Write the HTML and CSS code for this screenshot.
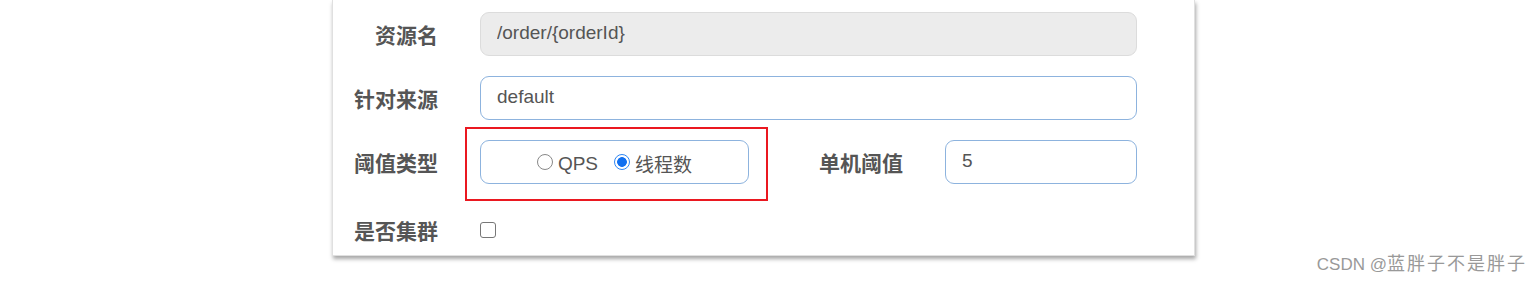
FILE: index.html
```html
<!DOCTYPE html>
<html lang="zh-CN">
<head>
	<meta charset="utf-8">
	<title>流控规则</title>
	<link rel="stylesheet" href="styles.css">
</head>
<body>
	<div class="panel">
		<!-- 资源名 -->
		<div class="form-row">
			<label class="form-label">资源名</label>
			<input class="form-input" type="text" value="/order/{orderId}" readonly>
		</div>

		<!-- 针对来源 -->
		<div class="form-row">
			<label class="form-label">针对来源</label>
			<input class="form-input" type="text" value="default">
		</div>

		<!-- 阈值类型 / 单机阈值 -->
		<div class="form-row">
			<label class="form-label">阈值类型</label>
			<div class="highlight">
				<div class="radio-group">
					<label class="radio"><input type="radio" name="grade"> QPS</label>
					<label class="radio"><input type="radio" name="grade" checked> 线程数</label>
				</div>
			</div>
			<label class="form-label side-label">单机阈值</label>
			<input class="form-input small-input" type="text" value="5">
		</div>

		<!-- 是否集群 -->
		<div class="form-row last-row">
			<label class="form-label">是否集群</label>
			<input class="checkbox" type="checkbox">
		</div>
	</div>

	<div class="watermark"><span class="wm-latin">CSDN @</span><span class="wm-cjk">蓝胖子不是胖子</span></div>
</body>
</html>
```

FILE: styles.css
```css
body {
	margin: 0;
	width: 1540px;
	height: 283px;
	position: relative;
	background: #fff;
	font-family: "Liberation Sans", "Noto Sans CJK SC", sans-serif;
	overflow: hidden;
}

.panel {
	margin-left: 332px;
	width: 863px;
	box-sizing: border-box;
	padding: 12px 57px 3px 0;
	background: #fff;
	border: 1px solid #e0e0e0;
	border-top: none;
	box-shadow: 1px 3px 4px rgba(0, 0, 0, 0.35);
}

.form-row {
	display: flex;
	align-items: center;
	height: 44px;
	margin-bottom: 20px;
}

.last-row {
	margin-top: 24px;
	margin-bottom: 0;
}

.form-label {
	width: 105px;
	margin-right: 42px;
	flex-shrink: 0;
	text-align: right;
	font-family: "Noto Sans CJK SC", sans-serif;
	font-size: 21px;
	font-weight: bold;
	color: #555;
}

.form-input {
	width: 657px;
	height: 44px;
	box-sizing: border-box;
	padding: 0 16px 3px;
	border: 1px solid #8db3de;
	border-radius: 9px;
	font-family: "Liberation Sans", "Noto Sans CJK SC", sans-serif;
	font-size: 19px;
	color: #555;
	outline: none;
}

.form-input[readonly] {
	background: #ececec;
	border-color: #dcdcdc;
}

.highlight {
	position: relative;
}

.highlight::after {
	content: "";
	position: absolute;
	top: -13px;
	left: -15px;
	right: -19px;
	bottom: -17px;
	border: 2px solid #ea1820;
}

.radio-group {
	width: 269px;
	height: 44px;
	box-sizing: border-box;
	display: flex;
	align-items: center;
	justify-content: center;
	gap: 16px;
	border: 1px solid #8db3de;
	border-radius: 9px;
	padding-top: 3px;
}

.radio {
	display: flex;
	align-items: center;
	gap: 5px;
	font-size: 19px;
	color: #555;
}

.radio input {
	appearance: none;
	-webkit-appearance: none;
	width: 16px;
	height: 16px;
	margin: 0 0 4px 0;
	border: 1px solid #888;
	border-radius: 50%;
	background: #fff;
}

.radio input:checked {
	border: 1.5px solid #2f86f3;
	background: radial-gradient(circle, #1170f0 0 4.5px, #fff 5.2px);
}

.side-label {
	flex: 1;
	width: auto;
}

.small-input {
	width: 192px;
}

.checkbox {
	appearance: none;
	-webkit-appearance: none;
	width: 16px;
	height: 16px;
	margin: 0;
	border: 1.5px solid #777;
	border-radius: 3px;
	background: #fff;
}

.watermark {
	position: absolute;
	right: 13px;
	top: 251px;
	line-height: 22px;
	color: #999;
	white-space: nowrap;
}

.wm-latin {
	font-family: "Liberation Sans", sans-serif;
	font-size: 17px;
}

.wm-cjk {
	font-family: "Noto Sans CJK SC", sans-serif;
	font-size: 18px;
	letter-spacing: 2px;
}
```
